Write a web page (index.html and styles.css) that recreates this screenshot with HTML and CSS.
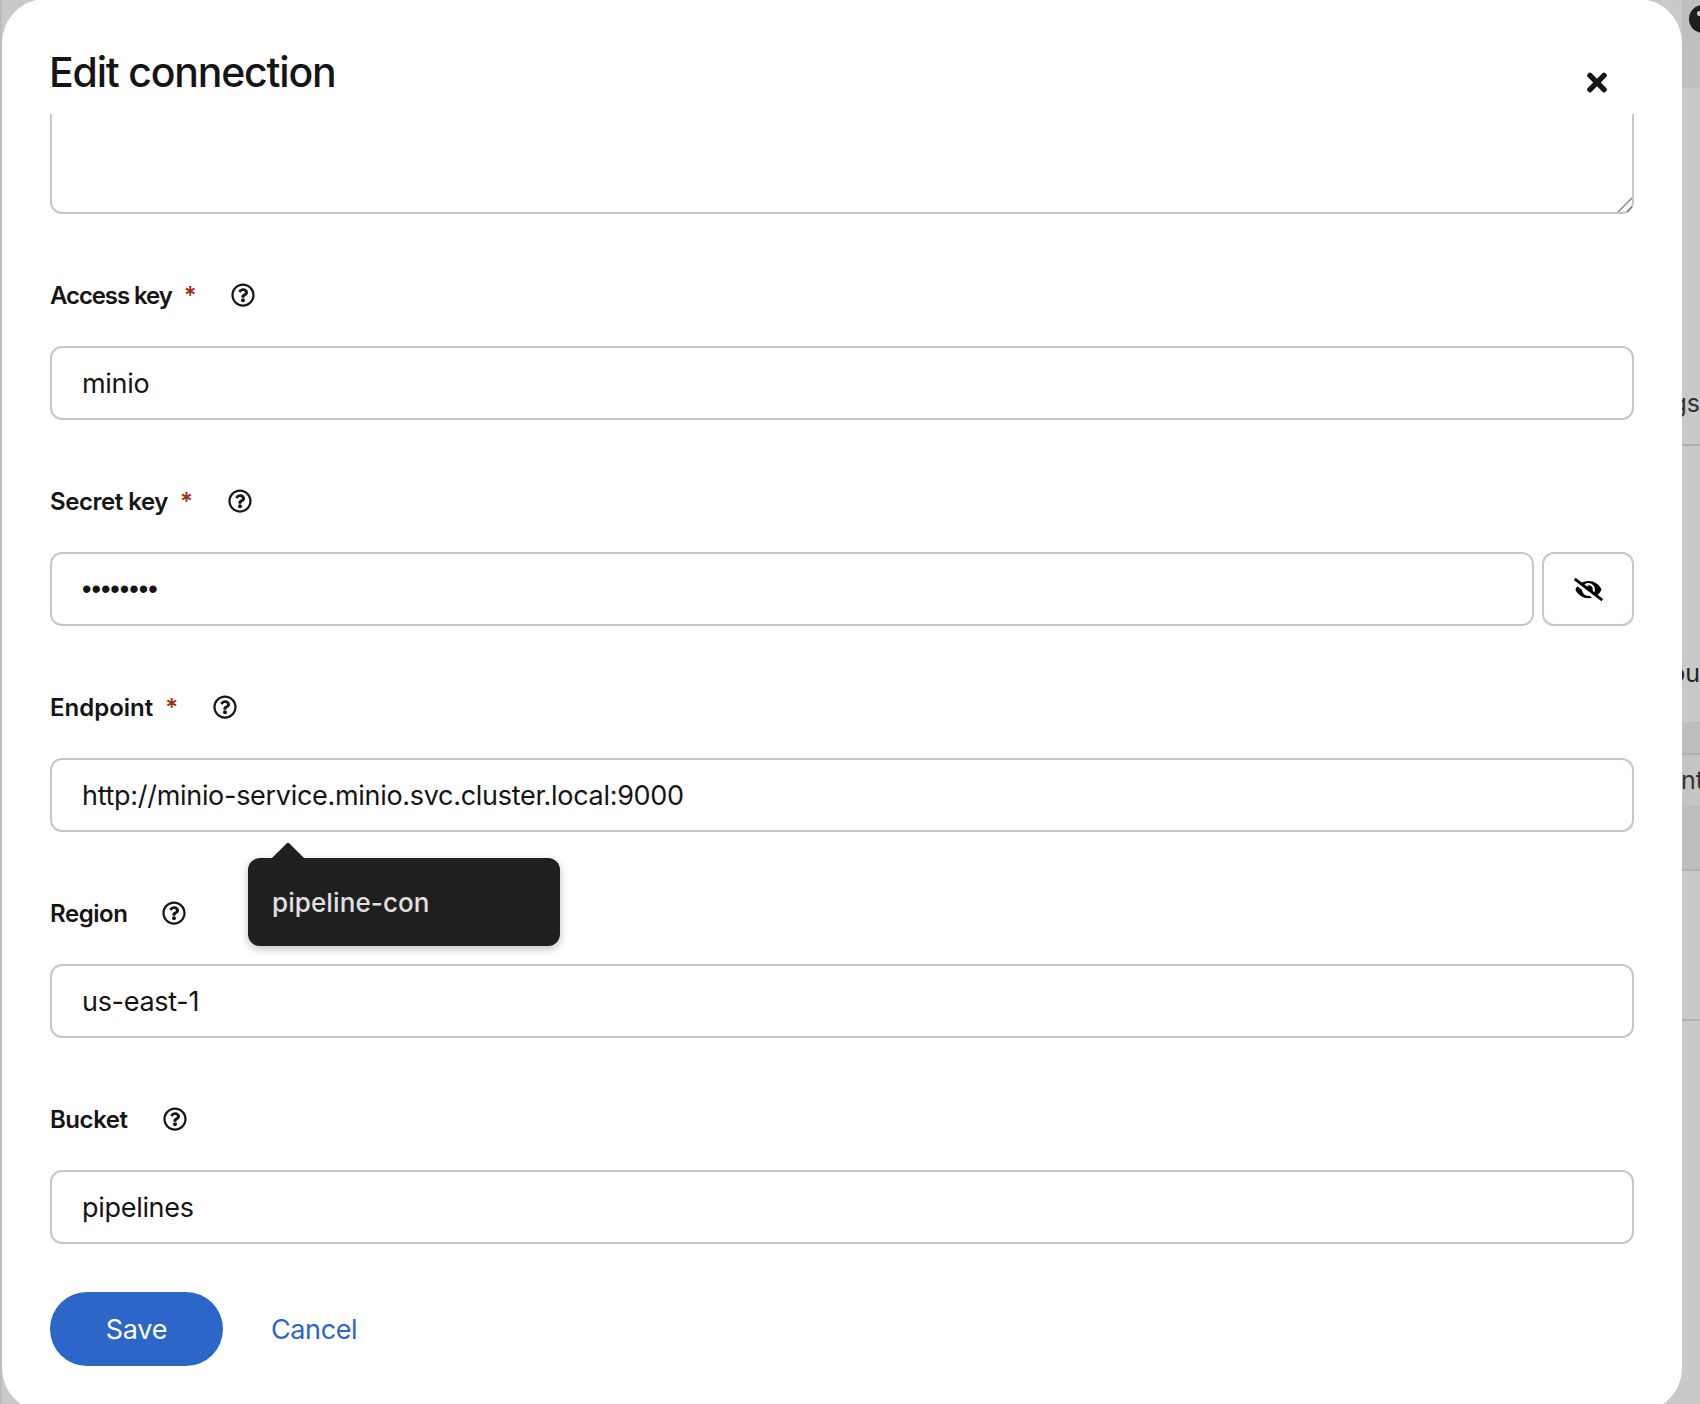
FILE: index.html
```html
<!DOCTYPE html>
<html lang="en">

<head>
	<meta charset="UTF-8">
	<title>Edit connection</title>
	<link rel="stylesheet" href="styles.css">
</head>

<body>
	<svg class="icon-defs" aria-hidden="true">
		<symbol id="help-icon" viewBox="0 0 512 512"><path d="M256 8C119.043 8 8 119.083 8 256c0 136.997 111.043 248 248 248s248-111.003 248-248C504 119.083 392.957 8 256 8zm0 448c-110.532 0-200-89.431-200-200 0-110.495 89.472-200 200-200 110.491 0 200 89.471 200 200 0 110.53-89.431 200-200 200zm107.244-255.2c0 67.052-72.421 68.084-72.421 92.863V300c0 6.627-5.373 12-12 12h-45.647c-6.627 0-12-5.373-12-12v-8.659c0-35.745 27.1-50.034 47.579-61.516 17.561-9.845 28.324-16.541 28.324-29.579 0-17.246-21.999-28.693-39.784-28.693-23.189 0-33.894 10.977-48.942 29.969-4.057 5.12-11.46 6.071-16.666 2.124l-27.824-21.098c-5.107-3.872-6.251-11.066-2.644-16.363C184.846 131.491 214.94 112 261.794 112c49.071 0 101.45 38.304 101.45 88.8zM298 368c0 23.159-18.841 42-42 42s-42-18.841-42-42 18.841-42 42-42 42 18.841 42 42z"/></symbol>
	</svg>

	<div class="page">
		<div class="left-strip"></div>

		<div class="modal">
			<header class="modal-header">
				<h1>Edit connection</h1>
				<button class="close-btn" aria-label="Close">
					<svg viewBox="0 0 352 512" width="20" height="29"><path d="M242.72 256l100.07-100.07c12.28-12.28 12.28-32.19 0-44.48l-22.24-22.24c-12.28-12.28-32.19-12.28-44.48 0L176 189.28 75.93 89.21c-12.28-12.28-32.19-12.28-44.48 0L9.21 111.45c-12.28 12.28-12.28 32.19 0 44.48L109.28 256 9.21 356.07c-12.28 12.28-12.28 32.19 0 44.48l22.24 22.24c12.28 12.28 32.2 12.28 44.48 0L176 322.72l100.07 100.07c12.28 12.28 32.2 12.28 44.48 0l22.24-22.24c12.28-12.28 12.28-32.19 0-44.48L242.72 256z"/></svg>
				</button>
			</header>

			<form class="modal-body">
				<div class="textarea-wrap">
					<textarea class="cut-textarea"></textarea>
					<svg class="grip" viewBox="0 0 16 16"><path d="M1 15 15 1M10 15l5-5.5"/></svg>
				</div>

				<div class="field">
					<div class="field-label">
						<label class="access-label" for="access">Access key</label>
						<span class="required">*</span>
						<svg class="help"><use href="#help-icon"/></svg>
					</div>
					<input class="text-input" id="access" type="text" value="minio">
				</div>

				<div class="field">
					<div class="field-label">
						<label for="secret">Secret key</label>
						<span class="required">*</span>
						<svg class="help"><use href="#help-icon"/></svg>
					</div>
					<div class="input-group">
						<input class="text-input secret-input" id="secret" type="password" value="minio123">
						<button type="button" class="eye-btn" aria-label="Show password">
							<svg viewBox="0 0 640 512" width="29" height="23"><path d="M320 400c-75.85 0-137.25-58.71-142.9-133.11L72.2 185.82c-13.79 17.3-26.48 35.59-36.72 55.59a32.35 32.35 0 0 0 0 29.19C89.71 376.41 197.07 448 320 448c26.91 0 52.87-4 77.89-10.46L346 397.39a144.13 144.13 0 0 1-26 2.61zm313.82 58.1l-110.55-85.44a331.25 331.25 0 0 0 81.25-102.07 32.35 32.35 0 0 0 0-29.19C550.29 135.59 442.93 64 320 64a308.15 308.15 0 0 0-147.32 37.7L45.46 3.37A16 16 0 0 0 23 6.18L3.37 31.45A16 16 0 0 0 6.18 53.9l588.36 454.73a16 16 0 0 0 22.46-2.81l19.64-25.27a16 16 0 0 0-2.82-22.45zm-183.72-142l-39.3-30.38A94.75 94.75 0 0 0 416 256a94.76 94.76 0 0 0-121.31-92.21A47.65 47.65 0 0 1 304 192a46.64 46.64 0 0 1-1.54 10l-73.61-56.89A142.31 142.31 0 0 1 320 112a143.92 143.92 0 0 1 144 144c0 21.63-5.29 41.79-13.9 60.11z"/></svg>
						</button>
					</div>
				</div>

				<div class="field endpoint-field">
					<div class="field-label">
						<label class="endpoint-label" for="endpoint">Endpoint</label>
						<span class="required">*</span>
						<svg class="help"><use href="#help-icon"/></svg>
					</div>
					<input class="text-input" id="endpoint" type="text" value="http://minio-service.minio.svc.cluster.local:9000">
					<div class="tooltip">pipeline-con</div>
				</div>

				<div class="field">
					<div class="field-label">
						<label for="region">Region</label>
						<svg class="help"><use href="#help-icon"/></svg>
					</div>
					<input class="text-input" id="region" type="text" value="us-east-1">
				</div>

				<div class="field">
					<div class="field-label">
						<label for="bucket">Bucket</label>
						<svg class="help"><use href="#help-icon"/></svg>
					</div>
					<input class="text-input" id="bucket" type="text" value="pipelines">
				</div>

				<div class="actions">
					<button type="button" class="save-btn">Save</button>
					<button type="button" class="cancel-btn">Cancel</button>
				</div>
			</form>
		</div>

		<div class="right-strip">
			<div class="strip-top"><span class="dark-dot"></span></div>
			<div class="strip-row row-gs"><span>ngs</span></div>
			<div class="strip-row row-ou"><span>ou</span></div>
			<div class="strip-band"></div>
			<div class="strip-row row-nt"><span>int</span></div>
			<div class="strip-band band-tall"></div>
			<div class="strip-row row-empty"></div>
		</div>
	</div>
</body>

</html>
```

FILE: styles.css
```css
* {
	margin: 0;
	padding: 0;
	box-sizing: border-box;
}

html,
body {
	height: 100%;
	overflow: hidden;
}

body {
	font-family: Inter, "Liberation Sans", sans-serif;
	color: #151515;
	background-color: #c9c9c9;
}

.icon-defs {
	display: none;
}

.page {
	display: flex;
	width: 1700px;
	height: 1404px;
	overflow: hidden;
}

.left-strip {
	width: 2px;
	background-color: #bcbcbc;
}

.modal {
	width: 1680px;
	height: 1413px;
	margin-top: -1px;
	flex-shrink: 0;
	border-radius: 44px;
	background-color: #fff;
}

.modal-header {
	display: flex;
	justify-content: space-between;
	height: 115px;
	padding: 47px 48px 0 47px;
}

.modal-header h1 {
	font-size: 41px;
	font-weight: 500;
	line-height: 52px;
	letter-spacing: -1.2px;
}

.close-btn {
	width: 20px;
	height: 29px;
	margin-top: 22px;
	margin-right: 27px;
	border: none;
	background: none;
}

.close-btn svg {
	fill: #151515;
}

.modal-body {
	padding: 0 48px;
}

.textarea-wrap {
	position: relative;
	margin-bottom: 63px;
}

.cut-textarea {
	display: block;
	width: 100%;
	height: 100px;
	border: 2px solid #c7c7c7;
	border-top: none;
	border-radius: 0 0 12px 12px;
	outline: none;
	resize: none;
}

.grip {
	position: absolute;
	right: 1px;
	bottom: 1px;
	width: 16px;
	height: 16px;
	fill: none;
	stroke: #777;
	stroke-width: 1.2;
}

.field {
	margin-bottom: 63px;
}

.endpoint-field {
	position: relative;
}

.field-label {
	display: flex;
	align-items: center;
	height: 36px;
	margin-bottom: 33px;
	font-size: 24px;
	font-weight: 600;
	letter-spacing: -0.45px;
}

.access-label {
	letter-spacing: -1.1px;
}

.endpoint-label {
	letter-spacing: 0;
}

.required {
	margin-left: 12px;
	color: #a5300f;
	font-size: 24px;
}

.help {
	width: 24px;
	height: 24px;
	margin-left: 35px;
	fill: #151515;
}

.text-input {
	display: block;
	width: 100%;
	height: 74px;
	padding: 0 30px;
	border: 2px solid #c7c7c7;
	border-radius: 12px;
	outline: none;
	color: #151515;
	font-family: inherit;
	font-size: 27px;
	letter-spacing: -0.3px;
}

.input-group {
	display: flex;
	gap: 8px;
}

.secret-input {
	flex: 1;
	font-family: "Liberation Sans", sans-serif;
	letter-spacing: 0;
}

.eye-btn {
	display: flex;
	align-items: center;
	justify-content: center;
	width: 92px;
	height: 74px;
	border: 2px solid #c7c7c7;
	border-radius: 12px;
	background: none;
}

.tooltip {
	position: absolute;
	left: 198px;
	top: 169px;
	width: 312px;
	height: 88px;
	padding-left: 24px;
	border-radius: 12px;
	background-color: #1f1f1f;
	box-shadow: 0 3px 8px rgba(0, 0, 0, 0.25);
	color: #e0e0e0;
	font-size: 26px;
	font-weight: 500;
	line-height: 90px;
	letter-spacing: 0.1px;
}

.tooltip::before {
	content: "";
	position: absolute;
	left: 28px;
	top: -11px;
	width: 24px;
	height: 24px;
	border-radius: 2px;
	background-color: #1f1f1f;
	transform: rotate(45deg);
}

.actions {
	display: flex;
	align-items: center;
	margin-top: -15px;
}

.save-btn {
	width: 173px;
	height: 74px;
	border: none;
	border-radius: 37px;
	background-color: #2b66c8;
	color: #fff;
	font-family: inherit;
	font-size: 27px;
	letter-spacing: -0.2px;
}

.cancel-btn {
	margin-left: 48px;
	border: none;
	background: none;
	color: #2b66c8;
	font-family: inherit;
	font-size: 27px;
	letter-spacing: -0.4px;
}

.right-strip {
	display: flex;
	flex-direction: column;
	width: 18px;
	flex-shrink: 0;
	color: #333;
	font-size: 25px;
}

.strip-top {
	height: 88px;
	overflow: hidden;
	background-color: #bfbfbf;
}

.dark-dot {
	display: block;
	width: 28px;
	height: 28px;
	margin-top: 5px;
	margin-left: 7px;
	padding: 6px 0 0 8px;
	border-radius: 50%;
	background-color: #1f1f1f;
}

.dark-dot::before {
	content: "";
	display: block;
	width: 5px;
	height: 5px;
	border-radius: 50%;
	background-color: #d0d0d0;
}

.strip-row {
	display: flex;
	justify-content: flex-end;
	overflow: hidden;
	border-bottom: 2px solid #b0b0b0;
	white-space: nowrap;
}

.row-gs {
	height: 358px;
	align-items: flex-end;
	padding-bottom: 26px;
}

.row-ou {
	height: 276px;
	padding-top: 212px;
	border-bottom: none;
	color: #222;
}

.strip-band {
	height: 33px;
	background-color: #bebebe;
	border-bottom: 2px solid #b0b0b0;
}

.row-nt {
	height: 50px;
	padding-top: 10px;
	margin-right: -4px;
	border-bottom: none;
	background-color: #c4c4c4;
}

.band-tall {
	height: 66px;
}

.row-empty {
	height: 150px;
}
```
